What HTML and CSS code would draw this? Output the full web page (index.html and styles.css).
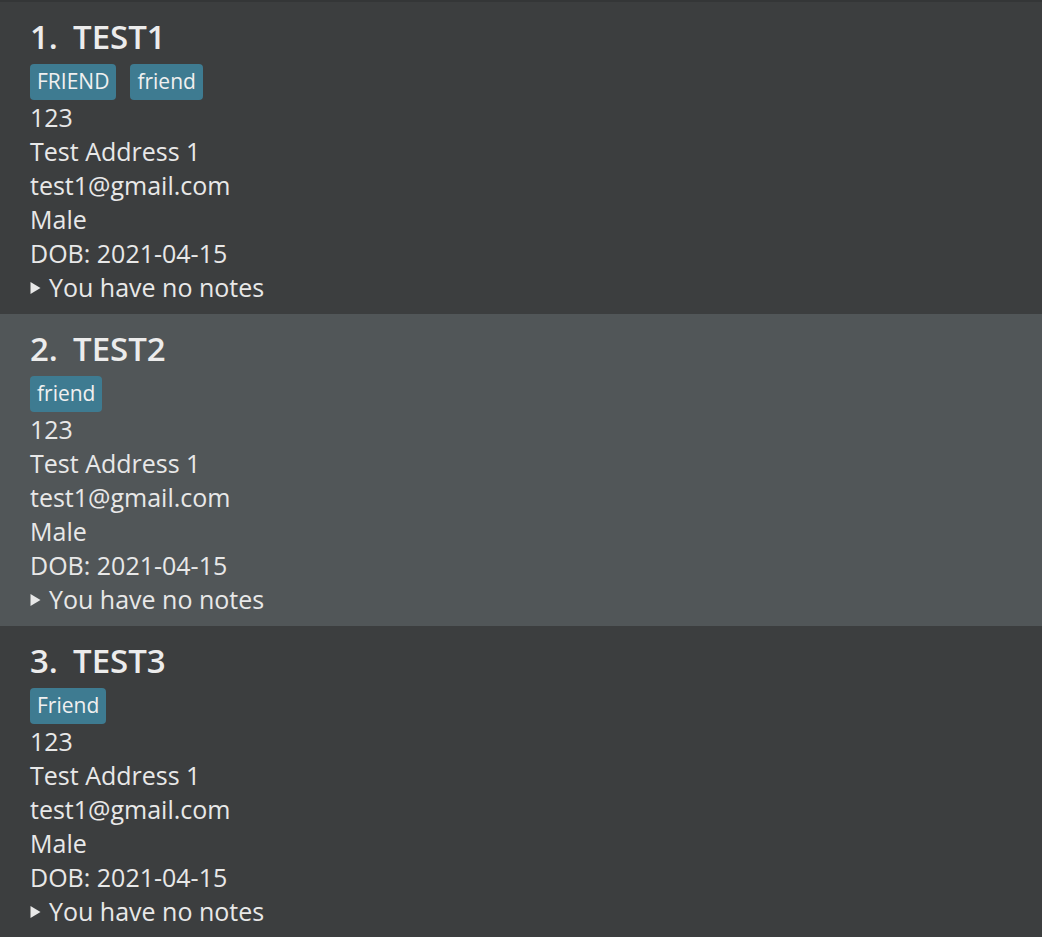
FILE: index.html
```html
<!DOCTYPE html>
<html>
<head>
<meta charset="utf-8">
<link rel="stylesheet" href="styles.css">
</head>
<body>
<div class="list">
  <div class="card even">
    <div class="title"><span class="idx">1.</span><span class="name">TEST1</span></div>
    <div class="tags"><span class="tag">FRIEND</span><span class="tag">friend</span></div>
    <div class="line">123</div>
    <div class="line">Test Address 1</div>
    <div class="line">test1@gmail.com</div>
    <div class="line">Male</div>
    <div class="line">DOB: 2021-04-15</div>
    <div class="line notes"><svg class="tri" width="11" height="14" viewBox="0 0 11 14"><polygon points="0.5,1 10.5,7 0.5,13" fill="#e8e8e8"/></svg><span>You have no notes</span></div>
  </div>
  <div class="card odd">
    <div class="title"><span class="idx">2.</span><span class="name">TEST2</span></div>
    <div class="tags"><span class="tag">friend</span></div>
    <div class="line">123</div>
    <div class="line">Test Address 1</div>
    <div class="line">test1@gmail.com</div>
    <div class="line">Male</div>
    <div class="line">DOB: 2021-04-15</div>
    <div class="line notes"><svg class="tri" width="11" height="14" viewBox="0 0 11 14"><polygon points="0.5,1 10.5,7 0.5,13" fill="#e8e8e8"/></svg><span>You have no notes</span></div>
  </div>
  <div class="card even">
    <div class="title"><span class="idx">3.</span><span class="name">TEST3</span></div>
    <div class="tags"><span class="tag">Friend</span></div>
    <div class="line">123</div>
    <div class="line">Test Address 1</div>
    <div class="line">test1@gmail.com</div>
    <div class="line">Male</div>
    <div class="line">DOB: 2021-04-15</div>
    <div class="line notes"><svg class="tri" width="11" height="14" viewBox="0 0 11 14"><polygon points="0.5,1 10.5,7 0.5,13" fill="#e8e8e8"/></svg><span>You have no notes</span></div>
  </div>
</div>
</body>
</html>
```

FILE: styles.css
```css
html, body {
  margin: 0;
  padding: 0;
  height: 100%;
  overflow: hidden;
}
body {
  background: #343637;
  font-family: "Open Sans", "Noto Sans", sans-serif;
  color: #e8e8e8;
}
.list {
  padding-top: 2px;
  display: flex;
  flex-direction: column;
}
.card {
  height: 312px;
  box-sizing: border-box;
  padding: 10px 30px 10px 30px;
  display: flex;
  flex-direction: column;
}
.even { background: #3c3e3f; }
.odd { background: #515658; }
.title {
  font-size: 33px;
  font-weight: 600;
  line-height: 48px;
  height: 48px;
  display: flex;
  color: #ececec;
  padding-top: 1px;
  box-sizing: border-box;
}
.idx { width: 43px; }
.tags {
  margin-top: 4px;
  display: flex;
  gap: 14px;
  height: 36px;
}
.tag {
  background: #3e7b91;
  color: #f0f0f0;
  font-size: 21px;
  font-weight: 500;
  line-height: 34px;
  padding: 0 7px 2px 7px;
  border-radius: 4px;
}
.line {
  font-size: 25px;
  line-height: 34px;
  height: 34px;
}
.notes {
  display: flex;
  align-items: center;
  gap: 8px;
}
.tri { flex: none; margin-top: 1px; }
```
